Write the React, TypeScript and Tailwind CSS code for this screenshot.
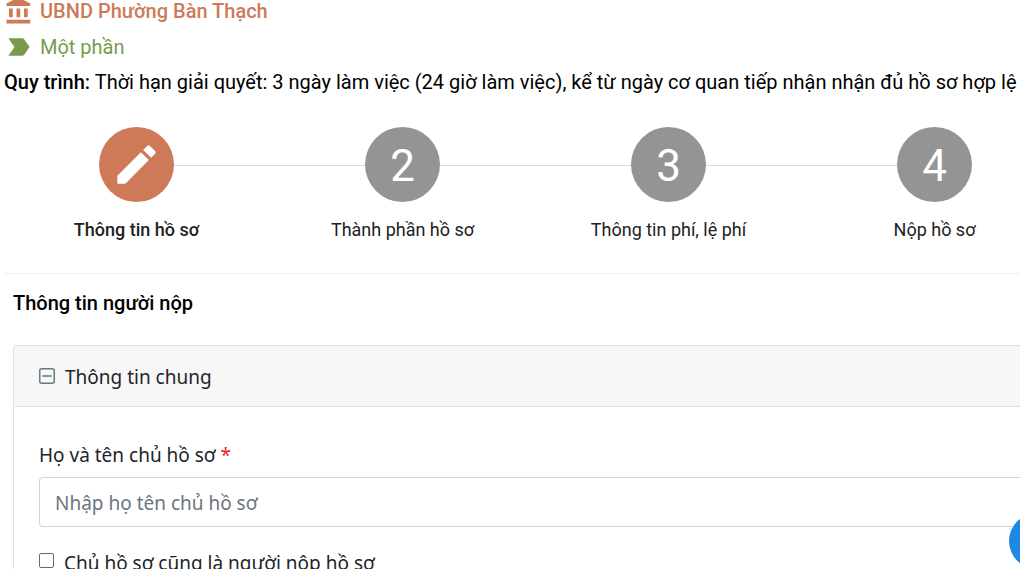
import { useState } from "react";
import { MdEdit, MdLabelImportant } from "react-icons/md";

const steps = ["Thông tin hồ sơ", "Thành phần hồ sơ", "Thông tin phí, lệ phí", "Nộp hồ sơ"];

function AgencyIcon() {
  return (
    <svg viewBox="0 0 24 24" className="size-[30px]" fill="currentColor">
      <path d="M4 10v7h3v-7H4zm6 0v7h3v-7h-3zM2 22h19v-3H2v3zm14-12v7h3v-7h-3zm-4.5-9L2 6v2h19V6l-9.5-5z" />
    </svg>
  );
}

function Stepper({ active }: { active: number }) {
  return (
    <ol className="mt-[31px] flex pr-12 pl-[99px]">
      {steps.map((label, i) => (
        <li key={label} className={i > 0 ? "flex flex-1" : "flex"}>
          {i > 0 && <span className="mt-[38px] h-px flex-1 bg-[#dcdcdc]" />}
          <button type="button" className="flex w-[75px] flex-col items-center gap-4">
            <span
              className={`flex size-[75px] items-center justify-center rounded-full text-[44px] text-white ${
                i === active ? "bg-[#ce7a58]" : "bg-[#949494] pt-1"
              }`}
            >
              {i === active ? <MdEdit className="size-[51px]" /> : i + 1}
            </span>
            <span
              className={`text-lg leading-6 whitespace-nowrap text-[#212121] ${
                i === active ? "font-medium" : ""
              }`}
            >
              {label}
            </span>
          </button>
        </li>
      ))}
    </ol>
  );
}

function GeneralInfo() {
  const [open, setOpen] = useState(true);
  const [sameAsOwner, setSameAsOwner] = useState(false);

  return (
    <section className="mt-7 ml-[13px] rounded-tl border-t border-l border-[#dfdfdf] font-['Noto_Sans','Segoe_UI',sans-serif] text-[#212529]">
      <button
        type="button"
        onClick={() => setOpen(!open)}
        aria-expanded={open}
        className="flex h-[61px] w-full items-center gap-2 rounded-tl border-b border-[#dfdfdf] bg-[#f7f7f7] px-[25px] pt-0.5 text-[19px]"
      >
        <svg viewBox="0 0 18 18" className="size-[18px]" fill="none" stroke="#66797f" strokeWidth="1.5">
          <rect x="0.75" y="0.75" width="14.5" height="14.5" rx="2" />
          <path d="M3.25 8h9.5" />
          {!open && <path d="M8 3.25v9.5" />}
        </svg>
        Thông tin chung
      </button>
      {open && (
        <div className="pt-8 pl-[25px] text-[19px] leading-8">
          <label htmlFor="owner" className="block">
            Họ và tên chủ hồ sơ <span className="text-[#f01818]">*</span>
          </label>
          <input
            id="owner"
            type="text"
            placeholder="Nhập họ tên chủ hồ sơ"
            className="mt-1.5 block h-[50px] w-full rounded-l border border-r-0 border-[#ced4da] px-[15px] pt-0.5 outline-none placeholder:text-[#6c757d]"
          />
          <label className="mt-5 flex items-center gap-2.5">
            <input
              type="checkbox"
              checked={sameAsOwner}
              onChange={(e) => setSameAsOwner(e.target.checked)}
              className="mb-1.5 size-[15px] appearance-none rounded-xs border border-[#6b6b6b] bg-white checked:bg-[#1e88e5]"
            />
            Chủ hồ sơ cũng là người nộp hồ sơ
          </label>
        </div>
      )}
    </section>
  );
}

export default function App() {
  return (
    <div className="h-screen overflow-hidden bg-white font-[Roboto,sans-serif] text-xl text-black">
      <header className="-mt-1 pl-1">
        <div className="flex items-center gap-1.5 font-medium text-[#ce7a58]">
          <AgencyIcon />
          UBND Phường Bàn Thạch
        </div>
        <div className="mt-1.5 flex items-center gap-1.5 text-[#7a9a4b]">
          <MdLabelImportant className="size-[30px]" />
          Một phần
        </div>
        <p className="mt-1.5 leading-7 whitespace-nowrap">
          <span className="font-medium">Quy trình:</span> Thời hạn giải quyết: 3 ngày làm việc (24 giờ làm
          việc), kể từ ngày cơ quan tiếp nhận nhận đủ hồ sơ hợp lệ
        </p>
      </header>

      <Stepper active={0} />

      <hr className="mt-[31px] ml-1 border-[#f0f0f0]" />

      <h2 className="mt-[15px] ml-[13px] leading-7 font-medium">Thông tin người nộp</h2>
      <GeneralInfo />

      <button
        type="button"
        aria-label="Hỗ trợ"
        className="fixed -right-[45px] bottom-0 size-14 rounded-full bg-[#1e88e5]"
      />
    </div>
  );
}
